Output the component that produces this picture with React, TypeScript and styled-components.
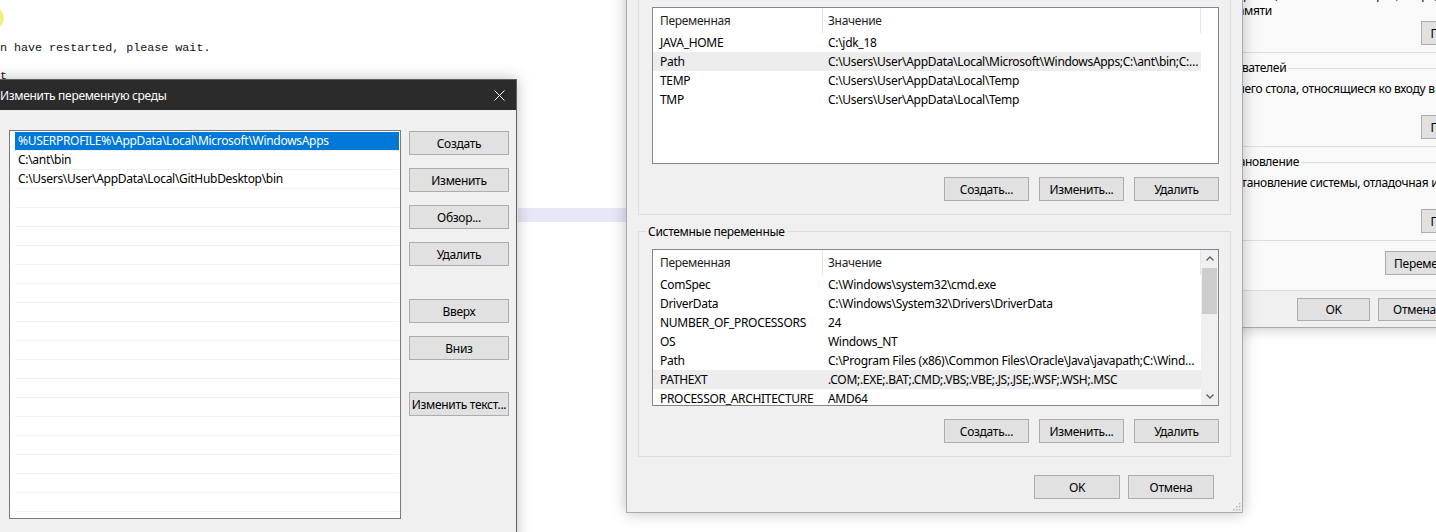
import React from "react";
import styled, { createGlobalStyle } from "styled-components";

const GlobalStyle = createGlobalStyle`
  html, body {
    margin: 0;
    padding: 0;
    background: #fff;
    overflow: hidden;
  }
`;

const Desktop = styled.main`
  position: relative;
  width: 1436px;
  height: 532px;
  overflow: hidden;
  background: #fff;
  font-family: "Noto Sans", "Liberation Sans", sans-serif;
  font-size: 12px;
  letter-spacing: -0.3px;
  color: #000;
`;

const Console = styled.pre`
  margin: 0;
  padding-top: 41px;
  font-family: "Liberation Mono", "DejaVu Sans Mono", monospace;
  font-size: 11.7px;
  line-height: 14px;
  letter-spacing: 0;
  color: #111;
`;

const TrayDot = styled.span`
  position: absolute;
  left: -17px;
  top: 7px;
  width: 21px;
  height: 22px;
  border-radius: 50%;
  background: #eef07c;
`;

const SelectionStripe = styled.div`
  position: absolute;
  left: 518px;
  top: 208px;
  width: 108px;
  height: 14px;
  background: #e7e7f8;
`;

const Window = styled.section<{ $active?: boolean }>`
  position: absolute;
  box-sizing: border-box;
  display: flex;
  flex-direction: column;
  background: #f0f0f0;
  border: 1px solid ${(p) => (p.$active ? "#5f5f5f" : "#aaaaaa")};
  box-shadow: 0 0 14px rgba(0, 0, 0, 0.25);
`;

const EditWindow = styled(Window)`
  left: -9px;
  top: 79px;
  width: 526px;
  height: 480px;
  z-index: 3;
`;

const EnvWindow = styled(Window)`
  left: 626px;
  bottom: 19px;
  width: 617px;
  z-index: 2;
`;

const SysWindow = styled(Window)`
  left: 1121px;
  bottom: 204px;
  width: 419px;
  z-index: 1;
`;

const TitleBar = styled.header<{ $active?: boolean }>`
  flex: none;
  height: 30px;
  display: flex;
  align-items: center;
  padding-left: 8px;
  background: ${(p) => (p.$active ? "#2b2b2b" : "#ffffff")};
  color: ${(p) => (p.$active ? "#ffffff" : "#8a8a8a")};
`;

const TitleText = styled.span`
  flex: 1;
  white-space: nowrap;
`;

const CloseButton = styled.span`
  width: 34px;
  height: 100%;
  display: flex;
  align-items: center;
  justify-content: center;
`;

const Button = styled.button<{ $width: number; $height?: number }>`
  box-sizing: border-box;
  flex: none;
  width: ${(p) => p.$width}px;
  height: ${(p) => p.$height ?? 24}px;
  padding: 0;
  font: inherit;
  letter-spacing: inherit;
  color: #000;
  background: #e1e1e1;
  border: 1px solid #adadad;
  white-space: nowrap;
  overflow: hidden;
`;

/* --- "Изменить переменную среды" --- */

const EditBody = styled.div`
  flex: 1;
  display: flex;
  align-items: flex-start;
  gap: 8px;
  padding: 20px 7px 0 17px;
`;

const PathList = styled.ul`
  box-sizing: border-box;
  flex: none;
  width: 392px;
  height: 389px;
  margin: 0;
  padding: 1px 1px 0 2px;
  list-style: none;
  background: #fff;
  border: 1px solid #7a7a7a;
  overflow: hidden;
`;

const PathItem = styled.li<{ $selected?: boolean }>`
  height: 18px;
  margin-left: 3px;
  padding-left: 3px;
  line-height: 18px;
  white-space: nowrap;
  border-bottom: 1px solid #f0f0f0;
  background: ${(p) => (p.$selected ? "#0078d7" : "transparent")};
  color: ${(p) => (p.$selected ? "#fff" : "#000")};
`;

const ButtonColumn = styled.div`
  display: flex;
  flex-direction: column;
  gap: 13px;
  padding-top: 1px;
`;

/* extra room between button groups, on top of the column gap */
const Spacer = styled.div<{ $size: number }>`
  height: ${(p) => p.$size}px;
  margin-top: -13px;
`;

/* --- "Переменные среды" --- */

const EnvBody = styled.div`
  display: flex;
  flex-direction: column;
  gap: 8px;
  padding: 10px 11px 13px;
`;

const GroupBox = styled.fieldset`
  margin: 0;
  min-width: 0;
  padding: 10px 11px 13px 13px;
  border: 1px solid #dcdcdc;
`;

const GroupLegend = styled.legend`
  margin-left: -6px;
  padding: 0 2px;
  line-height: 16px;
  transform: translateY(1px);
`;

const ListView = styled.div`
  box-sizing: border-box;
  height: 157px;
  display: flex;
  background: #fff;
  border: 1px solid #828790;
  overflow: hidden;
`;

const ListTable = styled.div`
  flex: 1;
  min-width: 0;
`;

const ListRow = styled.div<{ $header?: boolean; $selected?: boolean }>`
  display: grid;
  grid-template-columns: 170px 378px;
  width: 548px;
  height: ${(p) => (p.$header ? 25 : 19)}px;
  line-height: ${(p) => (p.$header ? 25 : 19)}px;
  background: ${(p) => (p.$selected ? "#ededed" : "transparent")};
`;

const Cell = styled.div<{ $header?: boolean; $pad: number }>`
  box-sizing: border-box;
  padding-left: ${(p) => p.$pad}px;
  white-space: nowrap;
  overflow: hidden;
  text-overflow: ellipsis;
  color: ${(p) => (p.$header ? "#1e1e1e" : "#000")};
  border-right: 1px solid ${(p) => (p.$header ? "#e5e5e5" : "transparent")};
`;

const ScrollTrack = styled.div`
  flex: none;
  width: 17px;
  display: flex;
  flex-direction: column;
  background: #f0f0f0;
`;

const ScrollArrow = styled.div`
  flex: none;
  height: 17px;
  display: flex;
  align-items: center;
  justify-content: center;
  color: #606060;
`;

const ScrollThumb = styled.div`
  flex: none;
  height: 46px;
  margin: 1px 1px 0;
  background: #cdcdcd;
`;

const ScrollFill = styled.div`
  flex: 1;
`;

const ButtonRow = styled.div<{ $gap: number }>`
  display: flex;
  justify-content: flex-end;
  gap: ${(p) => p.$gap}px;
  margin-top: 13px;
`;

const DialogFooter = styled.div`
  display: flex;
  justify-content: flex-end;
  gap: 8px;
  margin-top: 10px;
  padding-right: 17px;
`;

const Grip = styled.svg`
  position: absolute;
  right: 1px;
  bottom: 1px;
`;

/* --- "Свойства системы" --- */

const Tabs = styled.nav`
  display: flex;
  gap: 2px;
  height: 22px;
  padding: 6px 6px 0;
`;

const Tab = styled.span<{ $current?: boolean }>`
  padding: 0 6px;
  line-height: 21px;
  white-space: nowrap;
  background: ${(p) => (p.$current ? "#f9f9f9" : "#f0f0f0")};
  border: 1px solid #d9d9d9;
  border-bottom: none;
`;

const TabPanel = styled.div`
  display: flex;
  flex-direction: column;
  gap: 7px;
  margin: 0 6px;
  padding: 10px 10px 15px;
  background: #f9f9f9;
  border: 1px solid #d9d9d9;
`;

const SysGroup = styled.fieldset`
  margin: 0;
  min-width: 0;
  padding: 0 8px 7px;
  border: 1px solid #dcdcdc;
`;

const SysLegend = styled.legend`
  margin-left: -2px;
  padding: 0 2px;
  line-height: 16px;
  white-space: nowrap;
`;

const SysText = styled.p`
  min-height: 34px;
  margin: 5px 0 0;
  padding-left: 8px;
  line-height: 16px;
  white-space: nowrap;
`;

const SysActions = styled.div<{ $top: number }>`
  display: flex;
  justify-content: flex-end;
  margin-top: ${(p) => p.$top}px;
`;

const SysFooter = styled.div`
  display: flex;
  justify-content: flex-end;
  gap: 8px;
  padding: 7px 7px 6px;
`;

const CloseIcon = () => (
  <svg width="11" height="11" viewBox="0 0 11 11">
    <path d="M0.5 0.5 L10.5 10.5 M10.5 0.5 L0.5 10.5" stroke="currentColor" strokeWidth="1" />
  </svg>
);

const Chevron = ({ up }: { up?: boolean }) => (
  <svg width="8" height="5" viewBox="0 0 8 5">
    <path
      d={up ? "M0.5 4.5 L4 1 L7.5 4.5" : "M0.5 0.5 L4 4 L7.5 0.5"}
      fill="none"
      stroke="currentColor"
      strokeWidth="1.4"
    />
  </svg>
);

type EnvVar = { name: string; value: string; selected?: boolean };

const userVars: EnvVar[] = [
  { name: "JAVA_HOME", value: "C:\\jdk_18" },
  {
    name: "Path",
    value:
      "C:\\Users\\User\\AppData\\Local\\Microsoft\\WindowsApps;C:\\ant\\bin;C:\\Users\\User\\AppData\\Local\\GitHubDesktop\\bin",
    selected: true,
  },
  { name: "TEMP", value: "C:\\Users\\User\\AppData\\Local\\Temp" },
  { name: "TMP", value: "C:\\Users\\User\\AppData\\Local\\Temp" },
];

const systemVars: EnvVar[] = [
  { name: "ComSpec", value: "C:\\Windows\\system32\\cmd.exe" },
  { name: "DriverData", value: "C:\\Windows\\System32\\Drivers\\DriverData" },
  { name: "NUMBER_OF_PROCESSORS", value: "24" },
  { name: "OS", value: "Windows_NT" },
  {
    name: "Path",
    value:
      "C:\\Program Files (x86)\\Common Files\\Oracle\\Java\\javapath;C:\\Windows\\system32;C:\\Windows;C:\\Windows\\System32\\Wbem",
  },
  { name: "PATHEXT", value: ".COM;.EXE;.BAT;.CMD;.VBS;.VBE;.JS;.JSE;.WSF;.WSH;.MSC", selected: true },
  { name: "PROCESSOR_ARCHITECTURE", value: "AMD64" },
  { name: "PROCESSOR_IDENTIFIER", value: "AMD64 Family 25 Model 33 Stepping 0, AuthenticAMD" },
];

const pathEntries = [
  "%USERPROFILE%\\AppData\\Local\\Microsoft\\WindowsApps",
  "C:\\ant\\bin",
  "C:\\Users\\User\\AppData\\Local\\GitHubDesktop\\bin",
];

const VarList = ({ rows, scroll }: { rows: EnvVar[]; scroll?: boolean }) => (
  <ListView>
    <ListTable>
      <ListRow $header>
        <Cell $header $pad={7}>Переменная</Cell>
        <Cell $header $pad={5}>Значение</Cell>
      </ListRow>
      {rows.map((row) => (
        <ListRow key={row.name + row.value} $selected={row.selected}>
          <Cell $pad={7}>{row.name}</Cell>
          <Cell $pad={5}>{row.value}</Cell>
        </ListRow>
      ))}
    </ListTable>
    {scroll && (
      <ScrollTrack>
        <ScrollArrow>
          <Chevron up />
        </ScrollArrow>
        <ScrollThumb />
        <ScrollFill />
        <ScrollArrow>
          <Chevron />
        </ScrollArrow>
      </ScrollTrack>
    )}
  </ListView>
);

const VarButtons = () => (
  <ButtonRow $gap={10}>
    <Button $width={85}>Создать...</Button>
    <Button $width={85}>Изменить...</Button>
    <Button $width={85}>Удалить</Button>
  </ButtonRow>
);

const App = () => {
  const emptyRows = Array.from({ length: 20 - pathEntries.length }, (_, i) => i);

  return (
    <Desktop>
      <GlobalStyle />
      <TrayDot />
      <Console>{"n have restarted, please wait.\n\nt"}</Console>
      <SelectionStripe />

      <SysWindow>
        <TitleBar>
          <TitleText>Свойства системы</TitleText>
        </TitleBar>
        <Tabs>
          <Tab>Имя компьютера</Tab>
          <Tab>Оборудование</Tab>
          <Tab $current>Дополнительно</Tab>
        </Tabs>
        <TabPanel>
          <SysGroup>
            <SysLegend>Быстродействие</SysLegend>
            <SysText>
              Визуальные эффекты, использование процессора, оперативной и
              <br />
              виртуальной памяти
            </SysText>
            <SysActions $top={0}>
              <Button $width={92}>Параметры...</Button>
            </SysActions>
          </SysGroup>
          <SysGroup>
            <SysLegend>Профили пользователей</SysLegend>
            <SysText>Профили рабочего стола, относящиеся ко входу в систему</SysText>
            <SysActions $top={0}>
              <Button $width={92}>Параметры...</Button>
            </SysActions>
          </SysGroup>
          <SysGroup>
            <SysLegend>Загрузка и восстановление</SysLegend>
            <SysText>Загрузка и восстановление системы, отладочная информация</SysText>
            <SysActions $top={0}>
              <Button $width={92}>Параметры...</Button>
            </SysActions>
          </SysGroup>
          <SysActions $top={3}>
            <Button $width={137}>Переменные среды...</Button>
          </SysActions>
        </TabPanel>
        <SysFooter>
          <Button $width={73} $height={23}>OK</Button>
          <Button $width={73} $height={23}>Отмена</Button>
          <Button $width={73} $height={23}>Применить</Button>
        </SysFooter>
      </SysWindow>

      <EnvWindow>
        <TitleBar>
          <TitleText>Переменные среды</TitleText>
        </TitleBar>
        <EnvBody>
          <GroupBox>
            <GroupLegend>Переменные среды пользователя для User</GroupLegend>
            <VarList rows={userVars} />
            <VarButtons />
          </GroupBox>
          <GroupBox>
            <GroupLegend>Системные переменные</GroupLegend>
            <VarList rows={systemVars} scroll />
            <VarButtons />
          </GroupBox>
          <DialogFooter>
            <Button $width={86}>OK</Button>
            <Button $width={86}>Отмена</Button>
          </DialogFooter>
        </EnvBody>
        <Grip width="10" height="10" viewBox="0 0 10 10">
          {[
            [8, 2],
            [8, 5],
            [5, 5],
            [8, 8],
            [5, 8],
            [2, 8],
          ].map(([x, y]) => (
            <rect key={`${x}-${y}`} x={x} y={y} width="1.5" height="1.5" fill="#b5b5b5" />
          ))}
        </Grip>
      </EnvWindow>

      <EditWindow $active>
        <TitleBar $active>
          <TitleText>Изменить переменную среды</TitleText>
          <CloseButton>
            <CloseIcon />
          </CloseButton>
        </TitleBar>
        <EditBody>
          <PathList>
            {pathEntries.map((entry, i) => (
              <PathItem key={entry} $selected={i === 0}>
                {entry}
              </PathItem>
            ))}
            {emptyRows.map((i) => (
              <PathItem key={`empty-${i}`} />
            ))}
          </PathList>
          <ButtonColumn>
            <Button $width={100}>Создать</Button>
            <Button $width={100}>Изменить</Button>
            <Button $width={100}>Обзор...</Button>
            <Button $width={100}>Удалить</Button>
            <Spacer $size={20} />
            <Button $width={100}>Вверх</Button>
            <Button $width={100}>Вниз</Button>
            <Spacer $size={19} />
            <Button $width={100}>Изменить текст...</Button>
          </ButtonColumn>
        </EditBody>
      </EditWindow>
    </Desktop>
  );
};

export default App;
